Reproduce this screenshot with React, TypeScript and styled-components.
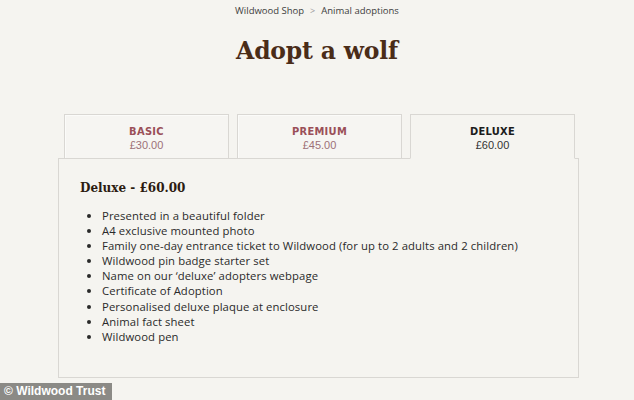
import styled, { createGlobalStyle } from "styled-components";

const GlobalStyle = createGlobalStyle`
  html, body {
    margin: 0;
    padding: 0;
    background: #f5f4f0;
  }
  body {
    width: 634px;
    height: 400px;
    overflow: hidden;
    font-family: "Open Sans", "DejaVu Sans", sans-serif;
  }
`;

const Page = styled.div`
  position: relative;
  width: 634px;
  height: 400px;
  display: flex;
  flex-direction: column;
  align-items: center;
`;

const Breadcrumb = styled.nav`
  margin-top: 5px;
  display: flex;
  align-items: center;
  gap: 6px;
  font-size: 9.5px;
  line-height: 12px;
  color: #3d3d3d;
`;

const Sep = styled.span`
  color: #9a9a9a;
  font-size: 9px;
`;

const Title = styled.h1`
  margin: 16px 0 0;
  font-family: "DejaVu Serif", "Liberation Serif", serif;
  font-weight: 700;
  font-size: 23.5px;
  line-height: 36px;
  color: #4a2c18;
  letter-spacing: -0.2px;
`;

const Adopt = styled.section`
  margin-top: 45px;
  width: 521px;
  margin-left: 3px;
`;

const TabRow = styled.div`
  display: flex;
  gap: 8px;
  padding-left: 6px;
  position: relative;
  z-index: 1;
  margin-bottom: -1px;
`;

const Tab = styled.button<{ active?: boolean }>`
  width: 165px;
  height: 45px;
  box-sizing: border-box;
  display: flex;
  flex-direction: column;
  align-items: center;
  justify-content: center;
  gap: 1px;
  padding: 3px 0 0;
  background: ${p => (p.active ? "#f5f4f0" : "#f6f5f2")};
  border: 1px solid #d9d7d3;
  border-bottom-color: ${p => (p.active ? "#f5f4f0" : "#d9d7d3")};
  box-shadow: ${p => (p.active ? "none" : "inset 1px 1px 0 #fbfbf9")};
  cursor: pointer;
`;

const TabName = styled.span<{ active?: boolean }>`
  font-family: "DejaVu Sans Condensed", "DejaVu Sans", sans-serif;
  font-stretch: condensed;
  font-weight: 700;
  font-size: 11px;
  line-height: 13px;
  letter-spacing: 0.3px;
  text-transform: uppercase;
  color: ${p => (p.active ? "#1c1c1c" : "#9a4f58")};
`;

const TabPrice = styled.span<{ active?: boolean }>`
  font-size: 11px;
  line-height: 13px;
  color: ${p => (p.active ? "#333" : "#9d7077")};
`;

const Panel = styled.div`
  box-sizing: border-box;
  height: 220px;
  border: 1px solid #d9d7d3;
  background: #f5f4f0;
  padding: 21px 21px;
`;

const PanelHeading = styled.h2`
  margin: 0 0 12px;
  font-family: "DejaVu Serif", "Liberation Serif", serif;
  font-weight: 700;
  font-size: 12px;
  line-height: 16px;
  color: #2c1b10;
`;

const Perks = styled.ul`
  margin: 0;
  padding-left: 22px;
  list-style: disc;
`;

const Perk = styled.li`
  font-size: 11.3px;
  line-height: 15.1px;
  color: #2a2a2a;
  letter-spacing: 0.1px;
`;

const Credit = styled.div`
  position: absolute;
  left: 0;
  bottom: 0;
  width: 112px;
  height: 17px;
  box-sizing: border-box;
  padding-left: 4px;
  background: #8b8a86;
  color: #fff;
  font-family: "Liberation Sans", Arial, sans-serif;
  font-weight: 700;
  font-size: 12px;
  line-height: 17px;
`;

const tiers = [
  { name: "Basic", price: "£30.00" },
  { name: "Premium", price: "£45.00" },
  { name: "Deluxe", price: "£60.00" },
];

const perks = [
  "Presented in a beautiful folder",
  "A4 exclusive mounted photo",
  "Family one-day entrance ticket to Wildwood (for up to 2 adults and 2 children)",
  "Wildwood pin badge starter set",
  "Name on our \u2018deluxe\u2019 adopters webpage",
  "Certificate of Adoption",
  "Personalised deluxe plaque at enclosure",
  "Animal fact sheet",
  "Wildwood pen",
];

export default function App() {
  const active = "Deluxe";
  return (
    <>
      <GlobalStyle />
      <Page>
        <Breadcrumb>
          <span>Wildwood Shop</span>
          <Sep>&gt;</Sep>
          <span>Animal adoptions</span>
        </Breadcrumb>
        <Title>Adopt a wolf</Title>
        <Adopt>
          <TabRow>
            {tiers.map(t => (
              <Tab key={t.name} active={t.name === active}>
                <TabName active={t.name === active}>{t.name}</TabName>
                <TabPrice active={t.name === active}>{t.price}</TabPrice>
              </Tab>
            ))}
          </TabRow>
          <Panel>
            <PanelHeading>Deluxe - £60.00</PanelHeading>
            <Perks>
              {perks.map(p => (
                <Perk key={p}>{p}</Perk>
              ))}
            </Perks>
          </Panel>
        </Adopt>
        <Credit>© Wildwood Trust</Credit>
      </Page>
    </>
  );
}
